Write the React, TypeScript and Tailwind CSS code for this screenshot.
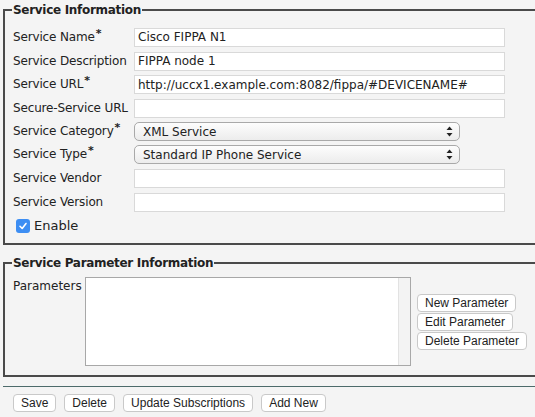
import type { ReactNode } from "react";

type Row = {
  label: string;
  required?: boolean;
  kind: "input" | "select";
  value: string;
  rowClass: string;
};

const rows: Row[] = [
  { label: "Service Name", required: true, kind: "input", value: "Cisco FIPPA N1", rowClass: "h-[24px]" },
  { label: "Service Description", kind: "input", value: "FIPPA node 1", rowClass: "h-[24px]" },
  { label: "Service URL", required: true, kind: "input", value: "http://uccx1.example.com:8082/fippa/#DEVICENAME#", rowClass: "h-[23px]" },
  { label: "Secure-Service URL", kind: "input", value: "", rowClass: "h-[24px]" },
  { label: "Service Category", required: true, kind: "select", value: "XML Service", rowClass: "h-[23px]" },
  { label: "Service Type", required: true, kind: "select", value: "Standard IP Phone Service", rowClass: "h-[23px]" },
  { label: "Service Vendor", kind: "input", value: "", rowClass: "h-[24px]" },
  { label: "Service Version", kind: "input", value: "", rowClass: "h-[24px]" },
];

function SelectArrows() {
  return (
    <svg width="7" height="11" viewBox="0 0 7 11" aria-hidden>
      <path d="M3.5 0.5 L6.5 4 L0.5 4 Z" fill="#222" />
      <path d="M3.5 10.5 L6.5 7 L0.5 7 Z" fill="#222" />
    </svg>
  );
}

function Btn({ children }: { children: ReactNode }) {
  return (
    <button
      className="h-[18px] px-[7px] bg-white border border-[#c9c9c9] rounded-[4px] text-[12px] leading-none text-[#222] whitespace-nowrap"
      style={{ fontFamily: '"Liberation Sans", Arial, sans-serif' }}
    >
      {children}
    </button>
  );
}

export default function App() {
  return (
    <div
      className="w-[535px] h-[417px] overflow-hidden bg-[#f4f4f4] text-[#222] text-[12px]"
      style={{ fontFamily: '"DejaVu Sans", Verdana, sans-serif' }}
    >
      {/* Service Information */}
      <fieldset className="ml-[3px] mt-[2px] w-[560px] border-2 border-[#4a4a4a] pl-[8px] pt-[7px] pb-[5px]">
        <legend className="px-[1px] ml-[-1px] text-[12px] tracking-[-0.3px] font-bold leading-[16px]">
          Service Information
        </legend>
        {rows.map((r) => (
          <div key={r.label} className={`flex items-center ${r.rowClass}`}>
            <div className="w-[121px] shrink-0 whitespace-nowrap tracking-[-0.15px]">
              {r.label}
              {r.required && <span className="relative top-[-4px] ml-[1px] font-bold text-[11px]">*</span>}
            </div>
            {r.kind === "input" ? (
              <div className="w-[371px] h-[19px] bg-white border border-[#d9d9d9] px-[3px] flex items-center whitespace-nowrap overflow-hidden">
                {r.value}
              </div>
            ) : (
              <div className="w-[326px] h-[19px] rounded-[5px] border border-[#a9a9a9] bg-gradient-to-b from-[#fdfdfd] to-[#ececec] pl-[8px] pr-[6px] flex items-center justify-between">
                <span>{r.value}</span>
                <SelectArrows />
              </div>
            )}
          </div>
        ))}
        <div className="flex items-center h-[24px] pl-[3px] gap-[4px]">
          <span className="w-[14px] h-[14px] rounded-[3px] bg-[#3d8ef3] flex items-center justify-center">
            <svg width="10" height="10" viewBox="0 0 10 10" aria-hidden>
              <path d="M2 5.3 L4.2 7.5 L8 2.5" stroke="white" strokeWidth="1.6" fill="none" strokeLinecap="round" strokeLinejoin="round" />
            </svg>
          </span>
          <span className="text-[13px]">Enable</span>
        </div>
      </fieldset>

      {/* Service Parameter Information */}
      <fieldset className="ml-[3px] mt-[10px] w-[560px] border-2 border-[#4a4a4a] pl-[8px] pt-[6px] pb-[9px]">
        <legend className="px-[1px] ml-[-1px] text-[12px] tracking-[-0.3px] font-bold leading-[16px]">
          Service Parameter Information
        </legend>
        <div className="flex">
          <div className="w-[72px] shrink-0">Parameters</div>
          <div className="w-[326px] h-[89px] bg-white border border-[#a8a8a8] flex justify-end">
            <div className="w-[12px] h-full bg-[#f3f3f3] border-l border-[#e2e2e2]" />
          </div>
          <div className="ml-[6px] flex flex-col items-start gap-[1px] self-center">
            <Btn>New Parameter</Btn>
            <Btn>Edit Parameter</Btn>
            <Btn>Delete Parameter</Btn>
          </div>
        </div>
      </fieldset>

      <div className="ml-[3px] mt-[9px] h-[1px] bg-[#4d6b6b]" />

      <div className="flex gap-[8px] pl-[13px] mt-[7px]">
        <Btn>Save</Btn>
        <Btn>Delete</Btn>
        <Btn>Update Subscriptions</Btn>
        <Btn>Add New</Btn>
      </div>
    </div>
  );
}
